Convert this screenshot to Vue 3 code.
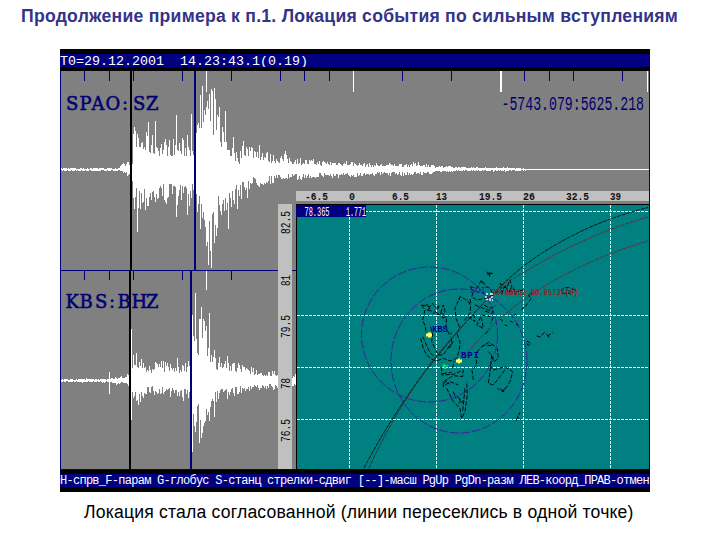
<template>
  <main class="slide">
    <h1 class="title">Продолжение примера к п.1. Локация события по сильным вступлениям</h1>

    <section class="screen">
      <header class="bar bar-top">T0=29.12.2001&nbsp; 14.23:43.1(0.19)</header>

      <div class="workspace">
        <svg class="traces" width="590" height="399" viewBox="60 71 590 399">
          <g shape-rendering="crispEdges">
            <path :d="tracePath(spao)" class="wave" />
            <path :d="tracePath(kbs)" class="wave" />
            <path d="M526 169.5H649" class="wave" />
            <path :d="ticks" class="navy-line" />
            <path d="M206.5 71v21M353.5 71v21M647 71v21M206.5 271v19" class="wave" />
            <path d="M501 71v21" class="wave thick" />
            <path d="M60.5 71V470M649.5 71V470M60 270.5H296M60 469.5H650" class="navy-line" />
            <path d="M195 71V270M191 270V470" class="navy-line thick" />
            <path d="M131 71V270M130 270V470" class="black-line thick" />
          </g>
          <text class="station" y="110" x="66 79.5 91.5 105.5 122 133 146">SPAO:SZ</text>
          <text class="station" y="308" x="65.5 79.5 95 109 117.5 131.5 146">KBS:BHZ</text>
          <text class="range" transform="translate(501.5 110) scale(.66 1)">-5743.079:5625.218</text>
        </svg>

        <div class="map-window">
          <svg width="372" height="279" viewBox="278 191 372 279">
            <g shape-rendering="crispEdges">
              <rect x="296" y="191" width="353" height="10" fill="#c0c0c0" />
              <rect x="292" y="201" width="357" height="3" fill="#808080" />
              <rect x="278" y="204" width="14" height="265" fill="#c0c0c0" />
              <rect x="296" y="204" width="354" height="266" fill="#000" />
              <rect x="297" y="205" width="352" height="264" fill="#008080" />
              <path
                d="M349.5 205V469M436.5 205V469M523.5 205V469M610.5 205V469M297 211.5H649M297 315.5H649M297 367.5H649M297 419.5H649"
                class="grid-line"
              />
            </g>

            <text
              v-for="label in lonLabels"
              :key="label.text"
              class="lon"
              :x="label.x"
              y="200"
              :textLength="label.width"
              lengthAdjust="spacingAndGlyphs"
            >{{ label.text }}</text>
            <text
              v-for="label in latLabels"
              :key="label.text"
              class="lat"
              :transform="`translate(290 ${label.y}) rotate(-90)`"
              :textLength="label.width"
              lengthAdjust="spacingAndGlyphs"
            >{{ label.text }}</text>

            <ellipse cx="429.5" cy="334.5" rx="68" ry="67.5" class="range-circle" />
            <ellipse cx="459" cy="361" rx="68" ry="72" class="range-circle" />

            <g transform="translate(410 255) scale(.33333)">
              <path v-for="(d, i) in coast" :key="i" :d="d" class="coast" />
            </g>

            <path d="M364 468Q398 404 436 358Q482 300 523 266.5Q578 225 648 207.500" class="azimuth" />
            <path d="M369 468Q394 412 436 356L466 322" class="azimuth dim" />
            <path d="M489 297Q505 282 523 273Q585 235 648 217" class="azimuth red" />
            <path d="M464 357Q480 337 498 320Q560 267 648 241" class="azimuth red" />

            <text class="code" x="432" y="332" textLength="16">KBS</text>
            <text class="code" x="461" y="358" textLength="18">BPI</text>
            <text class="code faint" x="470" y="293" textLength="16">SOI</text>
            <text class="solution" x="492" y="294.500" textLength="86" lengthAdjust="spacingAndGlyphs">78.68652 20.95737(0)</text>

            <g fill="#ffff66">
              <path d="M428 332.500h3v1h1v3h-1v1h-3v-1h-2v-3h2z" />
              <path d="M458 358.500h2v1h2v3h-2v1h-2v-1h-2v-3h2z" />
            </g>
            <path d="M443 364h2v1h3v1h-2v3h-2v-2h-2z" fill="#00e050" />
            <path d="M486 294h2m2 0h3M486 296v2m6-2v2M486 300l2-1m2-1v3m2-1h1" class="star" />

            <rect x="296" y="205" width="70" height="12" fill="#000080" shape-rendering="crispEdges" />
            <text class="cursor-pos" x="304.500" y="215.500" textLength="25" lengthAdjust="spacingAndGlyphs">78.365</text>
            <text class="cursor-pos" x="346" y="215.500" textLength="20" lengthAdjust="spacingAndGlyphs">1.771</text>
          </svg>
        </div>
      </div>

      <footer class="bar bar-bottom">Н-спрв_F-парам G-глобус S-станц стрелки-сдвиг [--]-масш PgUp PgDn-разм ЛЕВ-коорд_ПРАВ-отмен</footer>
    </section>

    <p class="caption">Локация стала согласованной (линии пересеклись в одной точке)</p>
  </main>
</template>

<script setup>
// envelope rows: [x, up, down]; spikes are drawn at full height
const spao = {
  base: 169.5,
  seed: 7,
  from: 61,
  to: 526,
  envelope: [
    [61, 1.5, 1.5], [119, 2, 2], [122, 6, 4], [129, 10, 9], [132, 14, 12], [133, 38, 28], [139, 38, 43],
    [150, 35, 36], [160, 32, 34], [175, 31, 34], [188, 30, 36], [194, 35, 34], [197, 48, 42],
    [202, 74, 55], [208, 72, 85], [214, 80, 75], [219, 56, 48], [225, 42, 44], [232, 24, 38],
    [239, 14, 34], [243, 34, 25], [250, 27, 19], [259, 23, 17], [270, 16, 14], [285, 15, 11],
    [297, 12, 11], [320, 9, 8], [345, 9, 9], [370, 6, 6], [420, 7, 6], [440, 4, 3], [455, 3, 2],
    [526, 2, 2]
  ],
  spikes: [
    [134, 43, 39], [137, 36, 62], [148, 48, 36], [155, 49, 32], [176, 55, 47], [187, 35, 45],
    [191, 56, 28], [200, 75, 59], [202, 84, 48], [206, 63, 76], [208, 61, 95], [211, 81, 98],
    [214, 82, 73], [216, 40, 66], [219, 63, 35], [225, 59, 28], [228, 20, 59], [233, 33, 30],
    [237, 12, 39], [243, 29, 12], [247, 21, 28], [259, 25, 17], [285, 19, 8]
  ]
}

const kbs = {
  base: 380.5,
  seed: 23,
  from: 61,
  to: 296,
  envelope: [
    [61, 2, 2], [109, 2, 2], [113, 4, 4], [124, 4, 4], [130, 9, 7], [133, 25, 20], [138, 27, 26],
    [144, 16, 16], [152, 18, 14], [165, 19, 15], [172, 20, 17], [180, 17, 16], [189, 21, 17],
    [192, 55, 64], [197, 54, 48], [201, 70, 58], [206, 54, 36], [211, 40, 32], [215, 24, 25],
    [223, 24, 20], [233, 20, 15], [245, 15, 12], [260, 11, 9], [275, 9, 9], [296, 6, 6]
  ],
  spikes: [
    [109, 9, 13], [131, 52, 39], [161, 20, 12], [177, 23, 15], [183, 15, 20], [192, 66, 71],
    [195, 88, 51], [199, 62, 62], [201, 74, 57], [206, 55, 28], [209, 68, 40], [214, 31, 36],
    [227, 25, 18], [239, 16, 11]
  ]
}

function amplitude(envelope, x, side) {
  const i = envelope.findIndex((p) => p[0] >= x)
  if (i <= 0) return envelope[0][side]
  const a = envelope[i - 1]
  const b = envelope[i]
  return a[side] + ((b[side] - a[side]) * (x - a[0])) / (b[0] - a[0])
}

function tracePath({ base, seed, from, to, envelope, spikes }) {
  let s = seed
  const random = () => {
    s = (s * 16807) % 2147483647
    return s / 2147483647
  }
  random()
  const tall = new Map(spikes.map((p) => [p[0], p]))
  let d = ''
  for (let x = from; x < to; x++) {
    const spike = tall.get(x)
    const up = spike ? spike[1] : amplitude(envelope, x, 1) * (0.42 + 0.62 * random() ** 1.4)
    const down = spike ? spike[2] : amplitude(envelope, x, 2) * (0.42 + 0.62 * random() ** 1.4)
    d += `M${x + 0.5} ${Math.round(base - up)}V${Math.round(base + down)}`
  }
  return d
}

const ticks = [
  ...[84, 109, 133, 182, 231, 280, 304, 329, 402, 451, 524, 549, 573, 622].map((x) => `M${x + 0.5} 71v10`),
  ...[84, 109, 133, 182, 231].map((x) => `M${x + 0.5} 271v9`)
].join('')

const lonLabels = [
  { text: '-6.5', x: 305, width: 23 },
  { text: '0', x: 349, width: 6 },
  { text: '6.5', x: 392, width: 17 },
  { text: '13', x: 436, width: 11 },
  { text: '19.5', x: 479, width: 23 },
  { text: '26', x: 523, width: 12 },
  { text: '32.5', x: 566, width: 23 },
  { text: '39', x: 610, width: 11 }
]

const latLabels = [
  { text: '82.5', y: 234, width: 23 },
  { text: '81', y: 286, width: 11 },
  { text: '79.5', y: 338, width: 23 },
  { text: '78', y: 389, width: 11 },
  { text: '76.5', y: 442, width: 23 }
]

const coast = [
  'M35 150L45 165L38 195L45 212L50 240M35 150L60 155L68 145L75 158L90 152L80 165L70 175L90 180L100 150L105 170L95 190L110 185L108 215L118 240L125 232',
  'M45 152L52 148L60 160L50 165L66 168M76 170L84 176L98 176',
  'M32 250L40 280L50 300L65 312L80 318L100 310L120 318L140 310L148 285L150 260L140 235L150 220L138 190L135 160L150 125L170 135L182 150L180 175L160 200',
  'M38 245L46 262L58 290L72 305M62 215L68 240L65 260L75 280L85 300L100 300L120 270L130 262M118 280L126 262L122 245',
  'M180 95L200 100L215 75L228 95L240 100L250 120L225 130L200 135L185 125L190 110L180 95M210 78L222 88M150 125L146 132L156 138M182 145L180 130',
  'M255 115L275 100L270 85L290 100L300 75L305 95L298 110L320 110L340 105M268 115L288 92L294 112L310 98L318 120M275 118L283 95',
  'M195 150L220 160L250 170L240 185L215 180L200 210L220 220L215 190M225 168L245 175M175 185L195 200L192 180L180 190M222 150L240 160L256 152M250 185L242 205',
  'M230 50L240 62M236 54L250 56M240 52L238 66M232 60L236 56',
  'M190 375L186 345L200 330L198 300L205 285L215 275L235 262L258 275M215 275L225 270L245 272M226 238L240 222M235 290L245 300L252 320L265 310L262 280',
  'M245 300L240 350L235 385L250 390L270 365L288 340M240 330L250 345L285 335L308 350L300 380L280 410L262 400M272 402L286 415M284 400L274 415',
  'M95 335L95 360L130 358L160 345L158 365L130 362L100 380L100 395L120 380L145 390M98 356L125 352M100 385L112 378L118 388M110 400L130 440L150 460L155 490L165 470L172 420L170 380M165 400L158 470M130 410L138 430',
  'M142 425L160 440L145 445M148 430L152 446M128 340L132 318',
  'M350 258L362 265L355 272L350 262M380 243L392 246M395 240L403 233L412 240L418 248M412 243L430 232M318 497L330 472M322 484L326 492',
  'M345 155L352 146L364 130L356 122L362 112L372 120M335 165L342 155M318 178L310 182M325 210L318 208M272 192L278 200M284 210L292 212M300 198L308 202',
  'M452 108L462 98L478 98M455 112L462 116L480 114M485 100L495 106L488 114M470 104L476 108'
]
</script>

<style>
body {
  margin: 0;
  background: #fff;
}
</style>

<style scoped>
.slide {
  width: 720px;
  height: 540px;
  overflow: hidden;
  display: flex;
  flex-direction: column;
  background: #fff;
  font-family: "Liberation Sans", Arial, sans-serif;
}

.title {
  margin: 0;
  padding: 6px 0 0 21px;
  height: 44px;
  box-sizing: border-box;
  font-size: 17.600px;
  line-height: 20px;
  letter-spacing: 0.25px;
  white-space: nowrap;
  color: #333388;
}

.screen {
  width: 590px;
  height: 443px;
  margin: 5px 0 0 60px;
  flex: none;
  display: flex;
  flex-direction: column;
  background: #808080;
}

.bar {
  box-sizing: border-box;
  flex: none;
  overflow: hidden;
  white-space: pre;
  background: #000080;
  color: #fff;
  font-family: "Liberation Mono", monospace;
}

.bar-top {
  height: 22px;
  border-top: 5px solid #000;
  border-bottom: 4px solid #000;
  font-size: 13.333px;
  line-height: 15px;
}

.bar-bottom {
  height: 22px;
  border-top: 4px solid #000;
  border-bottom: 5px solid #000;
  font-size: 12px;
  line-height: 15px;
  letter-spacing: -0.73px;
}

.workspace {
  position: relative;
  height: 399px;
}

.traces,
.map-window svg {
  display: block;
}

.map-window {
  position: absolute;
  right: 0;
  bottom: 0;
}

.wave {
  fill: none;
  stroke: #fff;
  stroke-width: 1;
}

.navy-line {
  fill: none;
  stroke: #000078;
  stroke-width: 1;
}

.black-line {
  stroke: #000;
}

.thick {
  stroke-width: 2;
}

.station {
  font-family: "DejaVu Serif", serif;
  font-size: 18px;
  fill: #000070;
  stroke: #000070;
  stroke-width: 0.5;
}

.range {
  font-family: "Liberation Mono", monospace;
  font-size: 20px;
  fill: #000070;
}

.grid-line {
  fill: none;
  stroke: #eef8f8;
  stroke-dasharray: 3 1;
}

.lon {
  font: bold 10px "Liberation Mono", monospace;
  fill: #111;
}

.lat {
  font: 13px "Liberation Mono", monospace;
  fill: #000;
}

.range-circle {
  fill: none;
  stroke: #402096;
  stroke-width: 1;
  stroke-dasharray: 9 2;
}

.coast {
  fill: none;
  stroke: #000a0a;
  stroke-width: 3;
  stroke-dasharray: 13 5;
}

.azimuth {
  fill: none;
  stroke: #0a1414;
  stroke-width: 1;
  stroke-dasharray: 4 1;
}

.azimuth.dim {
  stroke: #2c2c34;
}

.azimuth.red {
  stroke: #6a2a34;
}

.code {
  font: bold 9px "Liberation Mono", monospace;
  fill: #000090;
}

.code.faint {
  fill: #18288a;
  font-weight: normal;
}

.solution {
  font: bold 9px "Liberation Mono", monospace;
  fill: #a01c24;
}

.star {
  fill: none;
  stroke: #fff;
  stroke-width: 1.3;
}

.cursor-pos {
  font: 12px "Liberation Mono", monospace;
  fill: #fff;
}

.caption {
  margin: 0;
  padding: 9px 0 0 84px;
  font-size: 17.600px;
  line-height: 22px;
  letter-spacing: 0.19px;
  white-space: nowrap;
  color: #000;
}
</style>
